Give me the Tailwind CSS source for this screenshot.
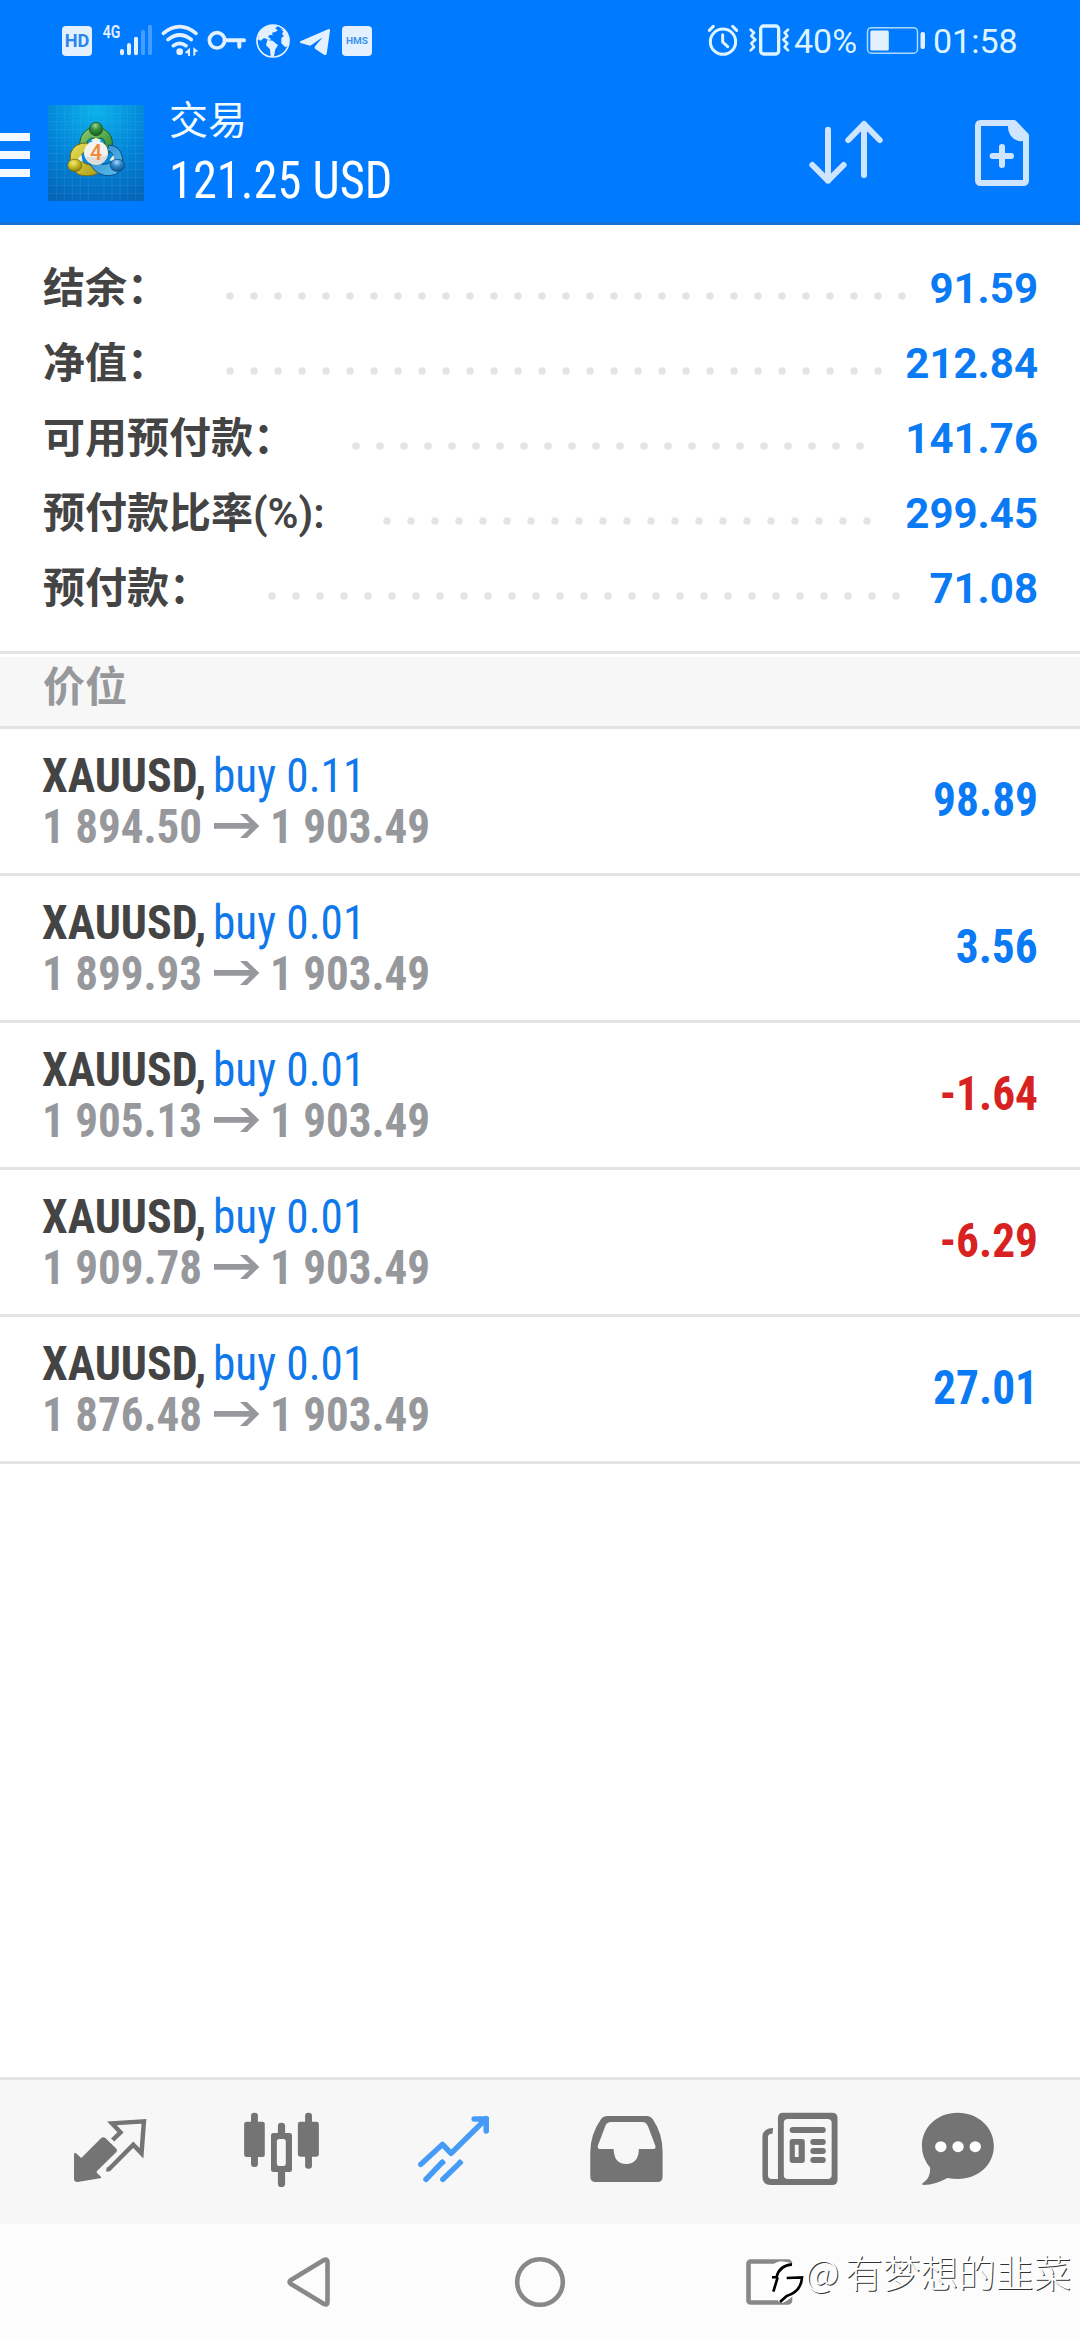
<!DOCTYPE html>
<html lang="zh-CN">
<head>
<meta charset="utf-8">
<title>交易</title>
<script src="https://cdn.jsdelivr.net/npm/@tailwindcss/browser@4"></script>
</head>
<body class="bg-white">
<div class="relative flex h-[2340px] w-[1080px] flex-col overflow-hidden bg-white font-[Roboto,'Noto_Sans_CJK_SC',sans-serif]">

  <header class="flex h-[225px] shrink-0 flex-col border-b-[3px] border-[#1670d6] bg-[#007aff] text-white">
    <!-- status bar -->
    <div class="flex h-[81px] items-start pl-[50px]">
      <svg class="mt-[10px] h-[60px] w-[340px] shrink-0" viewBox="0 0 1020 180" fill="#e3f1ff">
        <rect x="36" y="48" width="90" height="90" rx="12"/>
        <text x="81" y="112" text-anchor="middle" font-family="Roboto" font-weight="700" font-size="56" fill="#2a86ee" textLength="74" lengthAdjust="spacingAndGlyphs">HD</text>
        <text x="158" y="84" font-family="Roboto" font-weight="600" font-size="55" textLength="53" lengthAdjust="spacingAndGlyphs">4G</text>
        <g stroke="#e3f1ff" stroke-width="12" stroke-linecap="round">
          <path d="M216 123V130M237 105V130M258 86V130"/>
          <path d="M279 66V130M300 50V130" stroke-opacity=".3"/>
        </g>
        <g fill="none" stroke="#e3f1ff" stroke-width="11" stroke-linecap="round">
          <path d="M340 70Q389 30 438 70"/><path d="M354 89Q389 61 424 89"/><path d="M370 107Q389 93 408 107"/>
        </g>
        <circle cx="389" cy="125" r="10"/>
        <path d="M406 126L420 113V138H414V130H406zM430 112L445 124L436 126V135L430 138z"/>
        <circle cx="501" cy="91" r="23" fill="none" stroke="#e3f1ff" stroke-width="11"/>
        <path d="M524 91H582M568 91V110" fill="none" stroke="#e3f1ff" stroke-width="12" stroke-linecap="round"/>
        <circle cx="669" cy="93" r="48" fill="none" stroke="#e3f1ff" stroke-width="5"/>
        <path d="M626 72Q640 48 668 45L682 48L676 56L684 60L676 66L666 68L668 76L660 74L654 80L664 88L656 90L642 84L632 92L624 88zM652 90L668 92L684 106L676 118L672 140H662L660 118L648 106zM690 56L706 62L716 80V106L706 112L694 100V84L702 78L696 72L700 64z"/>
        <path d="M751 94L836 57Q841 56 840 62L830 132Q828 137 822 134L795 116Q792 112 796 108L818 82L783 106Q779 108 775 106L752 99Q747 97 751 94z"/>
        <rect x="876" y="48" width="90" height="90" rx="12"/>
        <text x="921" y="102" text-anchor="middle" font-family="Roboto" font-weight="700" font-size="28" fill="#3d92f2" textLength="66" lengthAdjust="spacingAndGlyphs">HMS</text>
      </svg>
      <svg class="mt-[10px] ml-[314px] h-[60px] w-[88px] shrink-0" viewBox="72 30 264 180" fill="none" stroke="#ddf5ff" stroke-linecap="round" stroke-linejoin="round">
        <circle cx="129" cy="125" r="38" stroke-width="9"/>
        <path d="M128 104V126L143 140" stroke-width="9"/>
        <path d="M88 91L100 79M170 91L158 79" stroke-width="9"/>
        <rect x="242" y="78" width="54" height="84" rx="9" stroke-width="10"/>
        <path d="M212 89L222 98L214 108L226 119L214 130L222 141L212 151M324 89L314 98L322 108L310 119L322 130L314 141L324 151" stroke-width="8"/>
      </svg>
      <span class="mt-[21px] ml-[2px] w-[72px] text-[34px] leading-[40px] text-[#ddf5ff]">40%</span>
      <svg class="mt-[24px] h-[33px] w-[64px]" viewBox="0 0 64 33" fill="#e3f1ff">
        <rect x="1.5" y="3.7" width="50" height="25.5" rx="4" fill="none" stroke="#a9dcff" stroke-width="1.5"/>
        <rect x="4.3" y="6.5" width="18.5" height="20" rx="1.5"/>
        <rect x="54.5" y="8" width="4.5" height="17" rx="2"/>
      </svg>
      <span class="mt-[21px] ml-[3px] text-[34px] leading-[40px] text-[#ddf5ff]">01:58</span>
    </div>
    <!-- toolbar -->
    <div class="flex h-[141px] items-start">
      <div class="mt-[52px] flex w-[30px] flex-col gap-[10px]">
        <i class="h-2 bg-[#f2f9ff]"></i><i class="h-2 bg-[#f2f9ff]"></i><i class="h-2 bg-[#f2f9ff]"></i>
      </div>
      <svg class="mt-[24px] ml-[18px] h-24 w-24 shrink-0" viewBox="24 30 288 288">
        <defs>
          <radialGradient id="sky" cx=".5" cy=".05" r="1"><stop offset="0" stop-color="#0cb2ea"/><stop offset=".55" stop-color="#0384d8"/><stop offset="1" stop-color="#0466b8"/></radialGradient>
          <linearGradient id="gr" x2="1" y2="1"><stop offset="0" stop-color="#8ed173"/><stop offset="1" stop-color="#22822c"/></linearGradient>
          <linearGradient id="ye" x2="1" y2="1"><stop offset="0" stop-color="#e9e25a"/><stop offset="1" stop-color="#a99a12"/></linearGradient>
          <linearGradient id="bl" x2="1" y2="1"><stop offset="0" stop-color="#2b86cc"/><stop offset="1" stop-color="#5cc0f0"/></linearGradient>
          <radialGradient id="gb" cx=".45" cy=".25" r=".8"><stop offset="0" stop-color="#9fd69a"/><stop offset=".4" stop-color="#37913d"/><stop offset="1" stop-color="#125a1c"/></radialGradient>
          <radialGradient id="yb" cx=".4" cy=".3" r=".8"><stop offset="0" stop-color="#f3ea7c"/><stop offset=".45" stop-color="#c9ba25"/><stop offset="1" stop-color="#7c7008"/></radialGradient>
          <radialGradient id="bb" cx=".45" cy=".25" r=".8"><stop offset="0" stop-color="#a5d8f6"/><stop offset=".45" stop-color="#2d86c8"/><stop offset="1" stop-color="#0d4d88"/></radialGradient>
        </defs>
        <rect x="24" y="30" width="288" height="288" fill="url(#sky)"/>
        <path d="M50 30V318M74 30V318M97 30V318M121 30V318M145 30V318M192 30V318M216 30V318M240 30V318M263 30V318M287 30V318M24 55H312M24 79H312M24 103H312M24 127H312M24 151H312M24 175H312M24 199H312M24 223H312M24 247H312M24 271H312M24 295H312" stroke="#8fdcff" stroke-opacity=".16" stroke-width="2"/>
        <path d="M120 160Q114 118 148 100H188Q222 118 217 156Q210 182 186 178Q204 150 188 130H152Q136 140 136 160z" fill="url(#gr)" stroke="#1c5c25" stroke-width="3"/>
        <path d="M142 144Q104 142 92 174Q84 216 114 238Q142 248 172 236Q184 226 180 212L150 210Q126 206 120 190Q124 172 144 166z" fill="url(#ye)" stroke="#756b10" stroke-width="3"/>
        <path d="M206 150Q240 152 247 186Q254 220 226 238Q190 250 164 226Q146 208 150 196L188 208Q214 208 222 190Q220 172 202 166z" fill="url(#bl)" stroke="#0f4f8a" stroke-width="3"/>
        <path d="M154 134L168 128L183 134L178 142H158zM112 194L124 178L128 200zM208 196L220 180L226 200z" fill="#e8f2e4"/>
        <circle cx="168" cy="102" r="20" fill="url(#gb)" stroke="#154f1c" stroke-width="2"/>
        <rect x="83" y="193" width="42" height="36" rx="18" fill="url(#yb)" stroke="#6a600c" stroke-width="2"/>
        <rect x="211" y="193" width="42" height="36" rx="18" fill="url(#bb)" stroke="#0d457a" stroke-width="2"/>
        <circle cx="168" cy="173" r="36" fill="#f4f2ee"/>
        <path d="M136 184Q168 192 203 180Q196 208 168 209Q144 206 136 184z" fill="#dddbd8"/>
        <text x="168" y="195" text-anchor="middle" font-family="Roboto" font-weight="500" font-size="64" fill="#f0893a">4</text>
      </svg>
      <div class="mt-[16px] ml-[25px] flex w-[400px] flex-col">
        <span class="text-[39px] leading-[48px] text-[#f2fbff]">交易</span>
        <span class="mt-[6px] origin-left scale-x-[.932] text-[52px] leading-[60px] font-stretch-condensed">121.25 USD</span>
      </div>
      <svg class="mt-[35px] ml-[237px] h-[74px] w-[228px] shrink-0" viewBox="378 348 684 222" fill="none" stroke="#cfe5ff" stroke-linecap="round" stroke-linejoin="round">
        <path d="M444 389V542M397 495L444 542L491 495M552 525V372M505 420L552 372L599 420" stroke-width="18"/>
        <path d="M902 369H1002L1038 407V540Q1038 549 1029 549H903Q894 549 894 540V378Q894 369 902 369z" stroke-width="18"/>
        <path d="M984 369Q980 415 1020 424L1038 422V405L1002 366z" fill="#cfe5ff" stroke="none"/>
        <path d="M938 468H993M966 441V495" stroke-width="18"/>
      </svg>
    </div>
  </header>

  <!-- account summary -->
  <section class="flex h-[429px] shrink-0 flex-col border-b-[3px] border-[#e3e3e3] pt-[26px] pr-[42px] pl-[43px] text-[42px] leading-[75px] font-bold text-[#444]">
    <div class="flex h-[75px]"><span class="w-[183px] whitespace-nowrap">结余：</span><svg width="680" height="75" class="shrink-0"><path d="M4 45H676.5" stroke="#e4e4e4" stroke-width="7.6" stroke-linecap="round" stroke-dasharray="0 24"/></svg><span class="ml-auto text-[#0a7af5]">91.59</span></div>
    <div class="flex h-[75px]"><span class="w-[183px] whitespace-nowrap">净值：</span><svg width="656" height="75" class="shrink-0"><path d="M4 45H652.5" stroke="#e4e4e4" stroke-width="7.6" stroke-linecap="round" stroke-dasharray="0 24"/></svg><span class="ml-auto text-[#0a7af5]">212.84</span></div>
    <div class="flex h-[75px]"><span class="w-[309px] whitespace-nowrap">可用预付款：</span><svg width="512" height="75" class="shrink-0"><path d="M4 45H508.5" stroke="#e4e4e4" stroke-width="7.6" stroke-linecap="round" stroke-dasharray="0 24"/></svg><span class="ml-auto text-[#0a7af5]">141.76</span></div>
    <div class="flex h-[75px]"><span class="w-[340px] whitespace-nowrap">预付款比率<span class="font-semibold">(%):</span></span><svg width="488" height="75" class="shrink-0"><path d="M4 45H484.5" stroke="#e4e4e4" stroke-width="7.6" stroke-linecap="round" stroke-dasharray="0 24"/></svg><span class="ml-auto text-[#0a7af5]">299.45</span></div>
    <div class="flex h-[75px]"><span class="w-[225px] whitespace-nowrap">预付款：</span><svg width="632" height="75" class="shrink-0"><path d="M4 45H628.5" stroke="#e4e4e4" stroke-width="7.6" stroke-linecap="round" stroke-dasharray="0 24"/></svg><span class="ml-auto text-[#0a7af5]">71.08</span></div>
  </section>

  <h2 class="mt-[3px] h-[72px] shrink-0 border-b-[3px] border-[#e3e3e3] bg-[#f7f7f7] pl-[43px] text-[42px] leading-[61px] font-bold text-[#96989c]">价位</h2>

  <!-- open positions -->
  <ul class="flex grow flex-col text-[48px] leading-[51px] font-bold whitespace-nowrap font-stretch-condensed">
    <li class="flex h-[147px] items-center justify-between border-b-[3px] border-[#e3e3e3] px-[42px]">
      <div>
        <p class="flex text-[#444]"><span class="w-[171px] origin-left scale-x-[.955]">XAUUSD,</span><span class="origin-left scale-x-[.942] font-normal text-[#0f78ea]">buy 0.11</span></p>
        <p class="flex text-[#96989c]"><span class="w-[172px] origin-left scale-x-[.938]">1 894.50</span><svg class="mt-[12px] mr-[10px] shrink-0" width="46" height="26" viewBox="0 -.5 46 26"><path d="M0 9.500H35.500L26 .500H33L45.300 12.400L33 24.500H26L35.500 15.300H0z" fill="#96989c"/></svg><span class="origin-left scale-x-[.938]">1 903.49</span></p>
      </div>
      <span class="mb-[3px] origin-right scale-x-[.945] text-[#0a7af5]">98.89</span>
    </li>
    <li class="flex h-[147px] items-center justify-between border-b-[3px] border-[#e3e3e3] px-[42px]">
      <div>
        <p class="flex text-[#444]"><span class="w-[171px] origin-left scale-x-[.955]">XAUUSD,</span><span class="origin-left scale-x-[.942] font-normal text-[#0f78ea]">buy 0.01</span></p>
        <p class="flex text-[#96989c]"><span class="w-[172px] origin-left scale-x-[.938]">1 899.93</span><svg class="mt-[12px] mr-[10px] shrink-0" width="46" height="26" viewBox="0 -.5 46 26"><path d="M0 9.500H35.500L26 .500H33L45.300 12.400L33 24.500H26L35.500 15.300H0z" fill="#96989c"/></svg><span class="origin-left scale-x-[.938]">1 903.49</span></p>
      </div>
      <span class="mb-[3px] origin-right scale-x-[.945] text-[#0a7af5]">3.56</span>
    </li>
    <li class="flex h-[147px] items-center justify-between border-b-[3px] border-[#e3e3e3] px-[42px]">
      <div>
        <p class="flex text-[#444]"><span class="w-[171px] origin-left scale-x-[.955]">XAUUSD,</span><span class="origin-left scale-x-[.942] font-normal text-[#0f78ea]">buy 0.01</span></p>
        <p class="flex text-[#96989c]"><span class="w-[172px] origin-left scale-x-[.938]">1 905.13</span><svg class="mt-[12px] mr-[10px] shrink-0" width="46" height="26" viewBox="0 -.5 46 26"><path d="M0 9.500H35.500L26 .500H33L45.300 12.400L33 24.500H26L35.500 15.300H0z" fill="#96989c"/></svg><span class="origin-left scale-x-[.938]">1 903.49</span></p>
      </div>
      <span class="mb-[3px] origin-right scale-x-[.945] text-[#d82222]">-1.64</span>
    </li>
    <li class="flex h-[147px] items-center justify-between border-b-[3px] border-[#e3e3e3] px-[42px]">
      <div>
        <p class="flex text-[#444]"><span class="w-[171px] origin-left scale-x-[.955]">XAUUSD,</span><span class="origin-left scale-x-[.942] font-normal text-[#0f78ea]">buy 0.01</span></p>
        <p class="flex text-[#96989c]"><span class="w-[172px] origin-left scale-x-[.938]">1 909.78</span><svg class="mt-[12px] mr-[10px] shrink-0" width="46" height="26" viewBox="0 -.5 46 26"><path d="M0 9.500H35.500L26 .500H33L45.300 12.400L33 24.500H26L35.500 15.300H0z" fill="#96989c"/></svg><span class="origin-left scale-x-[.938]">1 903.49</span></p>
      </div>
      <span class="mb-[3px] origin-right scale-x-[.945] text-[#d82222]">-6.29</span>
    </li>
    <li class="flex h-[147px] items-center justify-between border-b-[3px] border-[#e3e3e3] px-[42px]">
      <div>
        <p class="flex text-[#444]"><span class="w-[171px] origin-left scale-x-[.955]">XAUUSD,</span><span class="origin-left scale-x-[.942] font-normal text-[#0f78ea]">buy 0.01</span></p>
        <p class="flex text-[#96989c]"><span class="w-[172px] origin-left scale-x-[.938]">1 876.48</span><svg class="mt-[12px] mr-[10px] shrink-0" width="46" height="26" viewBox="0 -.5 46 26"><path d="M0 9.500H35.500L26 .500H33L45.300 12.400L33 24.500H26L35.500 15.300H0z" fill="#96989c"/></svg><span class="origin-left scale-x-[.938]">1 903.49</span></p>
      </div>
      <span class="mb-[3px] origin-right scale-x-[.945] text-[#0a7af5]">27.01</span>
    </li>
  </ul>

  <!-- tab bar -->
  <nav class="flex h-[147px] shrink-0 border-t-[3px] border-[#e3e3e3] bg-[#f7f7f7] pl-[22px]">
    <svg class="h-[144px] w-[173px]" viewBox="63.9 60 502.4 432" preserveAspectRatio="none" fill="#747474">
      <path d="M215 281Q216 277 221 280L236 294L294 234Q300 229 306 234L338 266Q342 271 338 276L281 334V338L293 350Q296 354 291 355L225 366Q215 366 215 357z"/>
      <path d="M327 240L350 217L325 190L418 184L411 280L387 254L318 326Q314 329 309 328" fill="none" stroke="#747474" stroke-width="13"/>
    </svg>
    <svg class="h-[144px] w-[173px]" viewBox="566.3 60 502.4 432" preserveAspectRatio="none" fill="#747474">
      <rect x="709" y="185" width="60" height="106" rx="7"/><rect x="865" y="185" width="61" height="105" rx="7"/>
      <rect x="729" y="158" width="20" height="163" rx="9"/><rect x="886" y="158" width="20" height="168" rx="9"/>
      <path d="M807 219V198Q807 188 817 188Q828 188 828 198V219H841Q848 219 848 226V329Q848 336 841 336H828V371Q828 381 817 381Q807 381 807 371V336H794Q787 336 787 329V226Q787 219 794 219zM811 237Q804 237 804 244V311Q804 318 811 318H823Q830 318 830 311V244Q830 237 823 237z" fill-rule="evenodd"/>
    </svg>
    <svg class="h-[144px] w-[173px]" viewBox="1068.7 60 502.4 432" preserveAspectRatio="none" fill="none" stroke="#469bf7" stroke-width="16" stroke-linecap="round" stroke-linejoin="round">
      <path d="M1222 313L1285 253L1310 280L1412 176M1377 177H1412V213"/>
      <path d="M1404 172H1418V190z" fill="#469bf7" stroke-width="4"/>
      <path d="M1237 358L1284 307M1286 358L1336 308"/>
      <path d="M1285 303L1289 308M1335 303L1340 308" stroke-width="9" stroke-linecap="square"/>
    </svg>
    <svg class="h-[144px] w-[173px]" viewBox="2.9 60 502.4 432" preserveAspectRatio="none" fill="#747474">
      <path d="M196 168H309Q322 168 329 180Q356 222 356 275V350Q356 366 341 366H162Q146 366 146 350V275Q147 222 177 178Q184 168 196 168zM207 186Q194 186 190 197L168 257Q166 267 176 267H214Q214 311 250 312Q287 311 287 267H327Q338 267 335 257L313 197Q308 187 298 186z" fill-rule="evenodd"/>
    </svg>
    <svg class="h-[144px] w-[173px]" viewBox="505.3 60 502.4 432" preserveAspectRatio="none" fill="#747474">
      <path d="M706 158H848Q864 158 864 174V360Q864 375 848 375H670Q646 375 646 350V228Q648 205 677 204L675 221Q662 220 662 232V346Q662 357 673 357H691V174Q691 158 706 158zM720 177Q708 177 708 189V345Q708 357 720 357H835Q847 357 847 345V189Q847 177 835 177z" fill-rule="evenodd"/>
      <rect x="725" y="201" width="105" height="18" rx="9"/>
      <path d="M733 237H761Q769 237 769 245V301Q769 309 761 309H733Q725 309 725 301V245Q725 237 733 237zM740 254V291H751V254z" fill-rule="evenodd"/>
      <rect x="785" y="237" width="45" height="18" rx="9"/><rect x="785" y="264" width="45" height="18" rx="9"/><rect x="785" y="291" width="45" height="18" rx="9"/>
    </svg>
    <svg class="h-[144px] w-[173px]" viewBox="1007.7 60 502.4 432" preserveAspectRatio="none" fill="#747474">
      <path d="M1213 158C1273 158 1318 202 1318 258S1273 357 1213 357Q1198 357 1183 354Q1150 374 1113 375Q1107 373 1112 369Q1134 355 1133 323Q1109 294 1109 258C1109 202 1153 158 1213 158z"/>
      <g fill="#fff"><circle cx="1164" cy="260" r="16.5"/><circle cx="1214" cy="260" r="16.5"/><circle cx="1264" cy="260" r="16.5"/></g>
    </svg>
  </nav>

  <!-- system navigation -->
  <div class="flex h-[116px] shrink-0 items-center bg-[#fcfcfc]">
    <svg class="h-[116px] w-[1080px]" viewBox="0 0 1080 116" fill="none" stroke="#888" stroke-width="4.6" stroke-linejoin="round">
      <path d="M324 36Q327.500 34.500 327.500 38V78Q327.500 81.500 324 80L291 60Q288 58 291 56Z"/>
      <circle cx="540" cy="58" r="22.800"/>
      <rect x="748.500" y="37.500" width="41.500" height="41" rx="2"/>
    </svg>
  </div>

  <!-- watermark -->
  <div class="absolute top-[2247px] left-[766px] flex items-start font-['Noto_Sans_CJK_SC',sans-serif] text-[37.7px] leading-[48px] font-light whitespace-nowrap text-white [text-shadow:1px_1px_0_#333]">
    <svg class="mt-[9px] h-[48px] w-[38px] shrink-0" viewBox="78 48 114 144">
      <path d="M120 64Q80 74 82 118Q84 150 110 164L116 186L130 188Q184 160 188 112Q182 66 120 64z" fill="#fff"/>
      <path d="M96 112L110 111Q116 78 156 73M113 112L100 155M140 114L186 112Q184 154 140 168L120 186" fill="none" stroke="#000" stroke-width="8"/>
    </svg>
    <span class="w-[41px] pl-px">@</span><span>有梦想的韭菜</span>
  </div>
</div>
</body>
</html>
